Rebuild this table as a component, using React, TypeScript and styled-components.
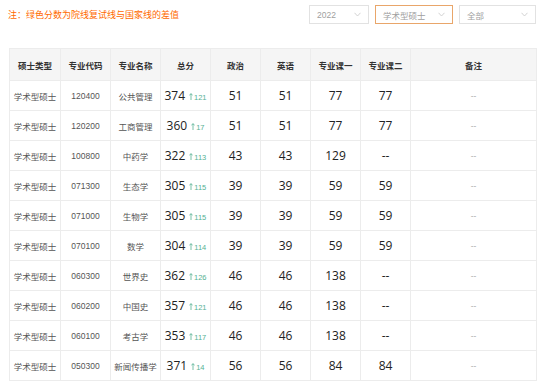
import React, { FunctionComponent } from 'react';
import styled, { createGlobalStyle } from 'styled-components';

const GlobalStyle = createGlobalStyle`
  html, body {
    margin: 0;
    padding: 0;
    background: #fff;
    font-family: "Liberation Sans", "Noto Sans CJK SC", sans-serif;
  }
`;

interface Row {
  type: string;
  code: string;
  name: string;
  total: string;
  diff: string;
  politics: string;
  english: string;
  courseOne: string;
  courseTwo: string;
}

const rows: Row[] = [
  { type: '学术型硕士', code: '120400', name: '公共管理', total: '374', diff: '121', politics: '51', english: '51', courseOne: '77', courseTwo: '77' },
  { type: '学术型硕士', code: '120200', name: '工商管理', total: '360', diff: '17', politics: '51', english: '51', courseOne: '77', courseTwo: '77' },
  { type: '学术型硕士', code: '100800', name: '中药学', total: '322', diff: '113', politics: '43', english: '43', courseOne: '129', courseTwo: '--' },
  { type: '学术型硕士', code: '071300', name: '生态学', total: '305', diff: '115', politics: '39', english: '39', courseOne: '59', courseTwo: '59' },
  { type: '学术型硕士', code: '071000', name: '生物学', total: '305', diff: '115', politics: '39', english: '39', courseOne: '59', courseTwo: '59' },
  { type: '学术型硕士', code: '070100', name: '数学', total: '304', diff: '114', politics: '39', english: '39', courseOne: '59', courseTwo: '59' },
  { type: '学术型硕士', code: '060300', name: '世界史', total: '362', diff: '126', politics: '46', english: '46', courseOne: '138', courseTwo: '--' },
  { type: '学术型硕士', code: '060200', name: '中国史', total: '357', diff: '121', politics: '46', english: '46', courseOne: '138', courseTwo: '--' },
  { type: '学术型硕士', code: '060100', name: '考古学', total: '353', diff: '117', politics: '46', english: '46', courseOne: '138', courseTwo: '--' },
  { type: '学术型硕士', code: '050300', name: '新闻传播学', total: '371', diff: '14', politics: '56', english: '56', courseOne: '84', courseTwo: '84' }
];

const columns = [
  { title: '硕士类型', width: 51 },
  { title: '专业代码', width: 50 },
  { title: '专业名称', width: 50 },
  { title: '总分', width: 50 },
  { title: '政治', width: 50 },
  { title: '英语', width: 50 },
  { title: '专业课一', width: 50 },
  { title: '专业课二', width: 50 },
  { title: '备注', width: 126 }
];

const Page = styled.div`
  width: 544px;
  height: 384px;
  overflow: hidden;
`;

const TopBar = styled.div`
  display: flex;
  align-items: flex-start;
  justify-content: space-between;
  height: 29px;
  padding: 0 8px 0 8px;
`;

const Note = styled.div`
  margin-top: 8px;
  font-size: 9px;
  line-height: 14px;
  color: #ff6a00;
  white-space: nowrap;
`;

const Filters = styled.div`
  display: flex;
  gap: 6px;
  margin-top: 5px;
`;

const Select = styled.div<{ $w: number; $active?: boolean }>`
  box-sizing: border-box;
  width: ${p => p.$w}px;
  height: 19px;
  display: flex;
  align-items: center;
  justify-content: space-between;
  padding: 0 7px 0 7px;
  border: 1px solid ${p => (p.$active ? '#e9a66a' : '#e2e2e2')};
  font-size: 8.5px;
  color: #a0a0a0;
`;

const Chevron = () => (
  <svg width="7" height="5" viewBox="0 0 7 5">
    <path d="M0.5 0.8 L3.5 4 L6.5 0.8" fill="none" stroke="#c8c8c8" strokeWidth="0.8" />
  </svg>
);

const Table = styled.table`
  margin: 19px 0 0 9px;
  border-collapse: collapse;
  table-layout: fixed;
  width: 527px;
`;

const HeadCell = styled.th`
  height: 31px;
  padding: 0;
  background: #f5f5f5;
  border: 1px solid #ececec;
  font-size: 8.5px;
  font-weight: bold;
  color: #333;
  text-align: center;
`;

const Cell = styled.td<{ $tone?: 'small' | 'num' | 'faint' }>`
  height: 29px;
  padding: 0;
  border: 1px solid #ececec;
  text-align: center;
  white-space: nowrap;
  font-family: ${p => (p.$tone === 'num' ? '"Open Sans", "Liberation Sans", sans-serif' : 'inherit')};
  font-size: ${p => (p.$tone === 'num' ? '12px' : '8.5px')};
  color: ${p => (p.$tone === 'faint' ? '#b0b0b0' : p.$tone === 'small' ? '#555' : '#222')};
`;

const Diff = styled.span`
  margin-left: 4px;
  font-family: "Liberation Sans", sans-serif;
  font-size: 7.5px;
  color: #55b193;
`;

const Arrow = () => (
  <svg width="4" height="7" viewBox="0 0 4 7" style={{ marginRight: 1 }}>
    <path d="M2 7 V0.8 M0.4 2.4 L2 0.6 L3.6 2.4" fill="none" stroke="#55b193" strokeWidth="0.8" />
  </svg>
);

const App: FunctionComponent = () => (
  <Page>
    <GlobalStyle />
    <TopBar>
      <Note>注：绿色分数为院线复试线与国家线的差值</Note>
      <Filters>
        <Select $w={60}>
          <span>2022</span>
          <Chevron />
        </Select>
        <Select $w={78} $active>
          <span>学术型硕士</span>
          <Chevron />
        </Select>
        <Select $w={77}>
          <span>全部</span>
          <Chevron />
        </Select>
      </Filters>
    </TopBar>
    <Table>
      <colgroup>
        {columns.map(c => (
          <col key={c.title} style={{ width: c.width }} />
        ))}
      </colgroup>
      <thead>
        <tr>
          {columns.map(c => (
            <HeadCell key={c.title}>{c.title}</HeadCell>
          ))}
        </tr>
      </thead>
      <tbody>
        {rows.map(r => (
          <tr key={r.code}>
            <Cell $tone="small">{r.type}</Cell>
            <Cell $tone="small">{r.code}</Cell>
            <Cell $tone="small">{r.name}</Cell>
            <Cell $tone="num">
              {r.total}
              <Diff>
                <Arrow />
                {r.diff}
              </Diff>
            </Cell>
            <Cell $tone="num">{r.politics}</Cell>
            <Cell $tone="num">{r.english}</Cell>
            <Cell $tone="num">{r.courseOne}</Cell>
            <Cell $tone="num">{r.courseTwo}</Cell>
            <Cell $tone="faint">--</Cell>
          </tr>
        ))}
      </tbody>
    </Table>
  </Page>
);

export default App;
